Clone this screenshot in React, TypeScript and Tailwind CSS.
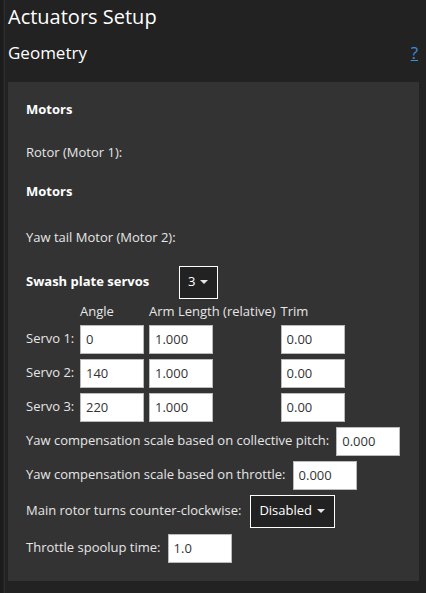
const font = { fontFamily: '"Open Sans", "Noto Sans", sans-serif' };

function NumInput({ value, width = "w-[64px]" }: { value: string; width?: string }) {
  return (
    <input
      readOnly
      value={value}
      className={`${width} h-[29px] border border-[#bbbbbb] bg-white px-[5px] text-[13px] text-[#333333] outline-none`}
    />
  );
}

function Select({ value, width }: { value: string; width: string }) {
  return (
    <div
      className={`${width} flex h-[33px] items-center justify-between border border-white bg-[#222222] pl-[8px] pr-[9px] text-[13px] text-white`}
    >
      <span>{value}</span>
      <svg width="8" height="4" viewBox="0 0 8 4">
        <path d="M0 0 L8 0 L4 4 Z" fill="#e6e6e6" />
      </svg>
    </div>
  );
}

const servos = [
  { name: "Servo 1:", angle: "0", arm: "1.000", trim: "0.00" },
  { name: "Servo 2:", angle: "140", arm: "1.000", trim: "0.00" },
  { name: "Servo 3:", angle: "220", arm: "1.000", trim: "0.00" },
];

export default function App() {
  return (
    <div className="h-[593px] w-[426px] overflow-hidden bg-[#222222] text-[#e6e6e6]" style={font}>
      <div className="flex h-full border-l-[3px] border-l-[#1c1c1c]">
        <div className="ml-[1px] h-full w-px bg-[#2c2c2c]" />
        <div className="flex-1 pl-[3px] pr-[7px]">
          <h1 className="pt-[3px] text-[20px] leading-[28px] text-white">Actuators Setup</h1>
          <div className="mt-[9px] flex items-center justify-between">
            <h2 className="text-[17px] leading-[24px] text-white">Geometry</h2>
            <span className="mr-[1px] text-[17px] text-[#3b8fd9] underline">?</span>
          </div>
          <div className="mt-[16px] h-[499px] bg-[#333333] px-[18px] pt-[18px] text-[13px]">
            <div className="font-bold leading-[18px] text-white">Motors</div>
            <div className="mt-[25px] leading-[18px]">Rotor (Motor 1):</div>
            <div className="mt-[21px] font-bold leading-[18px] text-white">Motors</div>
            <div className="mt-[28px] leading-[18px]">Yaw tail Motor (Motor 2):</div>
            <div className="mt-[20px] flex items-center">
              <span className="w-[153px] font-bold text-white">Swash plate servos</span>
              <Select value="3" width="w-[39px]" />
            </div>
            <div className="mt-[3px] grid grid-cols-[49px_auto_auto_auto] justify-start gap-x-[5px] gap-y-[5px]">
              <div />
              <div className="leading-[18px]">Angle</div>
              <div className="leading-[18px]">Arm Length (relative)</div>
              <div className="leading-[18px]">Trim</div>
              {servos.map((s) => (
                <div key={s.name} className="contents">
                  <div className="flex items-center whitespace-nowrap">{s.name}</div>
                  <NumInput value={s.angle} />
                  <div>
                    <NumInput value={s.arm} />
                  </div>
                  <NumInput value={s.trim} />
                </div>
              ))}
            </div>
            <div className="mt-[5px] flex items-center gap-[7px]">
              <span>Yaw compensation scale based on collective pitch:</span>
              <NumInput value="0.000" />
            </div>
            <div className="mt-[5px] flex items-center gap-[7px]">
              <span>Yaw compensation scale based on throttle:</span>
              <NumInput value="0.000" />
            </div>
            <div className="mt-[5px] flex items-center gap-[9px]">
              <span>Main rotor turns counter-clockwise:</span>
              <Select value="Disabled" width="w-[85px]" />
            </div>
            <div className="mt-[6px] flex items-center gap-[7px]">
              <span>Throttle spoolup time:</span>
              <NumInput value="1.0" />
            </div>
          </div>
        </div>
      </div>
    </div>
  );
}
